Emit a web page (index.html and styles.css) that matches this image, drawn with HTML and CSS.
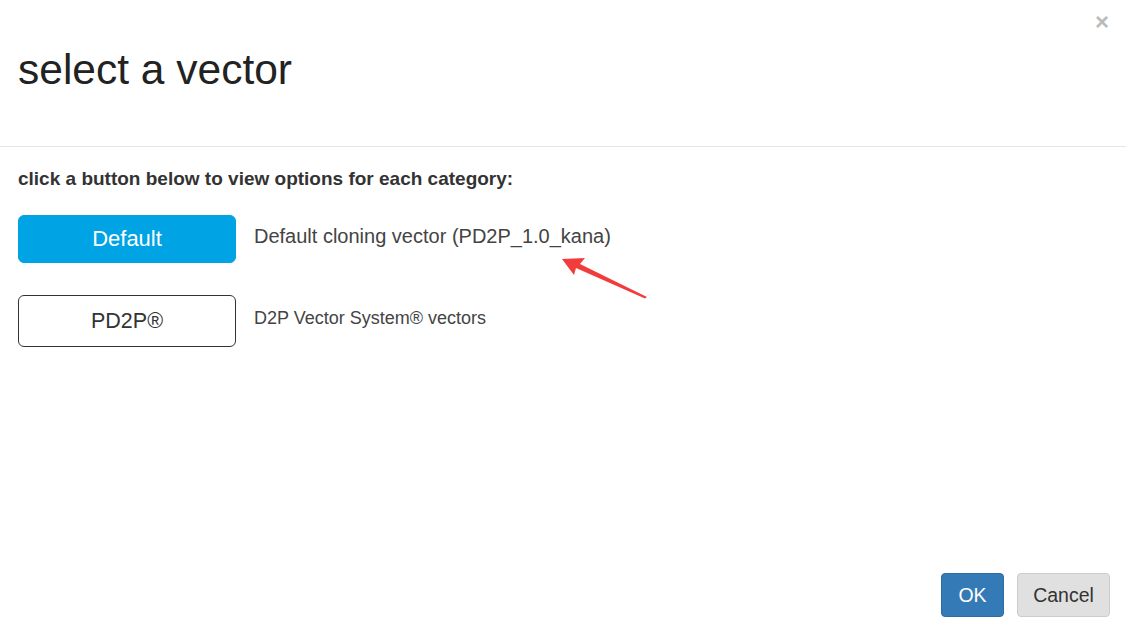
FILE: index.html
```
<!DOCTYPE html>
<html lang="en">
<head>
    <meta charset="UTF-8">
    <meta name="viewport" content="width=device-width, initial-scale=1.0">
    <title>Select a vector</title>
    <link rel="stylesheet" href="styles.css">
</head>
<body>
    <div class="modal">
        <!-- Header -->
        <div class="modal-header">
            <h1>select a vector</h1>
            <span class="close">&times;</span>
        </div>

        <div class="modal-body">
            <p class="hint">click a button below to view options for each category:</p>

            <div class="option-row">
                <button class="cat-button active">Default</button>
                <span class="desc">Default cloning vector (PD2P_1.0_kana)</span>
            </div>
            <div class="option-row">
                <button class="cat-button">PD2P&reg;</button>
                <span class="desc small">D2P Vector System&reg; vectors</span>
            </div>

            <!-- annotation arrow -->
            <svg class="arrow" width="100" height="50" viewBox="0 0 100 50">
                <path d="M2 2 L25 1 L20 7 L87 40 L85 41.5 L16 11 L14 18 Z" fill="#f23c3c"/>
            </svg>
        </div>

        <div class="modal-footer">
            <button class="btn btn-ok">OK</button>
            <button class="btn btn-cancel">Cancel</button>
        </div>
    </div>
</body>
</html>
```

FILE: styles.css
```
body {
    margin: 0;
    font-family: "Liberation Sans", Arial, sans-serif;
    background-color: #fff;
    color: #333;
}
.modal {
    height: 631px;
    display: flex;
    flex-direction: column;
}
.modal-header {
    position: relative;
    height: 147px;
    border-bottom: 1px solid #e5e5e5;
    padding: 0 18px;
    box-sizing: border-box;
}
.modal-header h1 {
    margin: 0;
    padding-top: 46px;
    font-size: 42.5px;
    font-weight: normal;
    color: #222;
}
.close {
    position: absolute;
    top: 8px;
    right: 17px;
    font-size: 24px;
    font-weight: bold;
    color: #bbb;
}
.modal-body {
    position: relative;
    flex: 1;
    padding: 0 18px;
}
.hint {
    margin: 21px 0 25px;
    font-size: 19px;
    font-weight: bold;
}
.option-row {
    display: flex;
    align-items: center;
    margin-bottom: 32px;
}
.cat-button {
    width: 218px;
    height: 48px;
    border: 1px solid #333;
    border-radius: 6px;
    background-color: #fff;
    color: #333;
    font-family: inherit;
    font-size: 21.5px;
    margin-right: 18px;
}
.cat-button.active {
    background-color: #00a3e4;
    border-color: #00a3e4;
    color: #fff;
    font-size: 22px;
}
.option-row + .option-row .cat-button {
    height: 52px;
}
.desc {
    font-size: 20px;
    color: #444;
    margin-bottom: 5px;
}
.desc.small {
    font-size: 18px;
}
.arrow {
    position: absolute;
    left: 560px;
    top: 110px;
}
.modal-footer {
    display: flex;
    justify-content: flex-end;
    gap: 13px;
    padding: 0 16px 14px;
}
.btn {
    height: 44px;
    border-radius: 4px;
    font-family: inherit;
    font-size: 19.5px;
    padding: 0;
}
.btn-ok {
    width: 63px;
    background-color: #337ab7;
    border: 1px solid #2e6da4;
    color: #fff;
}
.btn-cancel {
    width: 93px;
    background-color: #e0e0e0;
    border: 1px solid #ccc;
    color: #333;
}
```
